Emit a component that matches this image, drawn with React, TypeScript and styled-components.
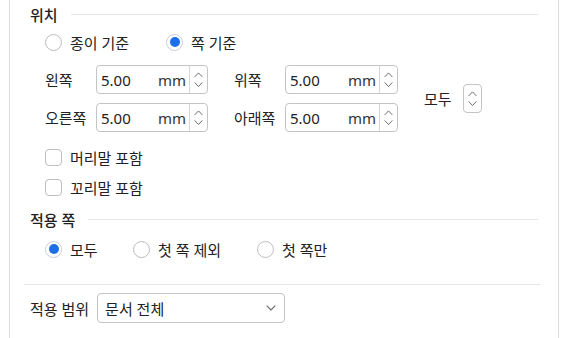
import React from "react";
import styled, { createGlobalStyle } from "styled-components";

const GlobalStyle = createGlobalStyle`
  body {
    margin: 0;
    background: #ffffff;
    font-family: "Noto Sans", "Noto Sans CJK KR", sans-serif;
    color: #222;
  }
`;

const Panel = styled.div`
  box-sizing: border-box;
  margin-left: 9px;
  width: 550px;
  height: 338px;
  padding: 0 20px;
  border-left: 1px solid #dedede;
  border-right: 1px solid #dedede;
  font-size: 15px;
`;

const SectionHeader = styled.div<{ $top?: number }>`
  display: flex;
  align-items: center;
  gap: 13px;
  height: 28px;
  margin-top: ${(p) => p.$top ?? 0}px;
  font-weight: 500;
  color: #1f1f1f;
  &::after {
    content: "";
    flex: 1;
    height: 1px;
    background: #e6e6e6;
  }
`;

const RadioRow = styled.div<{ $top?: number }>`
  display: flex;
  align-items: center;
  height: 28px;
  padding-left: 15px;
  margin-top: ${(p) => p.$top ?? 0}px;
`;

const Option = styled.label<{ $width: number }>`
  display: flex;
  align-items: center;
  gap: 8px;
  width: ${(p) => p.$width}px;
  color: #222;
`;

const RadioCircle = styled.span<{ $on?: boolean }>`
  box-sizing: border-box;
  width: 17px;
  height: 17px;
  border-radius: 50%;
  border: 1px solid ${(p) => (p.$on ? "#c9cfd8" : "#bdbdbd")};
  background: #fff;
  display: flex;
  align-items: center;
  justify-content: center;
  &::after {
    content: "";
    display: ${(p) => (p.$on ? "block" : "none")};
    width: 10px;
    height: 10px;
    border-radius: 50%;
    background: #1c6fe6;
  }
`;

const CheckBox = styled.span`
  box-sizing: border-box;
  width: 17px;
  height: 17px;
  border-radius: 4px;
  border: 1px solid #bdbdbd;
  background: #fff;
`;

const FieldsBlock = styled.div`
  display: flex;
  align-items: center;
  margin-top: 9px;
  padding-left: 15px;
`;

const FieldRows = styled.div`
  display: flex;
  flex-direction: column;
  gap: 9px;
`;

const FieldRow = styled.div`
  display: flex;
  gap: 26px;
`;

const Field = styled.div`
  display: flex;
  align-items: center;
`;

const FieldLabel = styled.span`
  width: 51px;
  color: #222;
`;

const SpinBox = styled.div<{ $width: number }>`
  box-sizing: border-box;
  display: flex;
  width: ${(p) => p.$width}px;
  height: 29px;
  border: 1px solid #c4c4c4;
  border-radius: 4px;
  background: #fff;
`;

const SpinText = styled.div`
  flex: 1;
  display: flex;
  align-items: center;
  justify-content: space-between;
  padding: 0 3px 0 4px;
  font-family: "Noto Sans", sans-serif;
  font-size: 15px;
  color: #222;
`;

const Unit = styled.span`
  color: #333;
`;

const Arrows = styled.div<{ $divider?: boolean }>`
  width: 17px;
  display: flex;
  flex-direction: column;
  align-items: center;
  justify-content: center;
  gap: 4px;
  border-left: ${(p) => (p.$divider ? "1px solid #d6d6d6" : "none")};
`;

const AllGroup = styled.div`
  display: flex;
  align-items: center;
  gap: 11px;
  margin-left: 26px;
`;

const LoneSpinner = styled.div`
  box-sizing: border-box;
  width: 19px;
  height: 29px;
  border: 1px solid #c4c4c4;
  border-radius: 4px;
  display: flex;
  justify-content: center;
`;

const CheckList = styled.div`
  display: flex;
  flex-direction: column;
  margin-top: 10px;
  padding-left: 15px;
`;

const CheckItem = styled.label`
  display: flex;
  align-items: center;
  gap: 8px;
  height: 30px;
  color: #222;
`;

const Divider = styled.div`
  height: 1px;
  background: #e6e6e6;
  margin: 21px -2px 0 -6px;
`;

const ScopeRow = styled.div`
  display: flex;
  align-items: center;
  gap: 8px;
  margin-top: 8px;
  color: #222;
`;

const Select = styled.div`
  box-sizing: border-box;
  display: flex;
  align-items: center;
  justify-content: space-between;
  width: 188px;
  height: 30px;
  padding: 0 8px 0 7px;
  border: 1px solid #c4c4c4;
  border-radius: 4px;
  background: #fff;
`;

const Chevron = ({ dir, size = 9 }: { dir: "up" | "down"; size?: number }) => (
  <svg width={size} height={size * 0.6} viewBox="0 0 10 6" fill="none">
    <path
      d={dir === "up" ? "M1 5.2 L5 1 L9 5.2" : "M1 0.8 L5 5 L9 0.8"}
      stroke="#6b6b6b"
      strokeWidth="1.1"
      strokeLinecap="round"
      strokeLinejoin="round"
    />
  </svg>
);

const Spinner = ({ divider }: { divider?: boolean }) => (
  <Arrows $divider={divider}>
    <Chevron dir="up" />
    <Chevron dir="down" />
  </Arrows>
);

const NumberField = ({ label, width }: { label: string; width: number }) => (
  <Field>
    <FieldLabel>{label}</FieldLabel>
    <SpinBox $width={width}>
      <SpinText>
        <span>5.00</span>
        <Unit>mm</Unit>
      </SpinText>
      <Spinner divider />
    </SpinBox>
  </Field>
);

export default function App() {
  return (
    <>
      <GlobalStyle />
      <Panel>
        <SectionHeader>위치</SectionHeader>
        <RadioRow>
          <Option $width={121}>
            <RadioCircle />
            종이 기준
          </Option>
          <Option $width={100}>
            <RadioCircle $on />
            쪽 기준
          </Option>
        </RadioRow>

        <FieldsBlock>
          <FieldRows>
            <FieldRow>
              <NumberField label="왼쪽" width={112} />
              <NumberField label="위쪽" width={113} />
            </FieldRow>
            <FieldRow>
              <NumberField label="오른쪽" width={112} />
              <NumberField label="아래쪽" width={113} />
            </FieldRow>
          </FieldRows>
          <AllGroup>
            <span>모두</span>
            <LoneSpinner>
              <Spinner />
            </LoneSpinner>
          </AllGroup>
        </FieldsBlock>

        <CheckList>
          <CheckItem>
            <CheckBox />
            머리말 포함
          </CheckItem>
          <CheckItem>
            <CheckBox />
            꼬리말 포함
          </CheckItem>
        </CheckList>

        <SectionHeader $top={3}>적용 쪽</SectionHeader>
        <RadioRow $top={2}>
          <Option $width={88}>
            <RadioCircle $on />
            모두
          </Option>
          <Option $width={124}>
            <RadioCircle />첫 쪽 제외
          </Option>
          <Option $width={100}>
            <RadioCircle />첫 쪽만
          </Option>
        </RadioRow>

        <Divider />

        <ScopeRow>
          <span>적용 범위</span>
          <Select>
            <span>문서 전체</span>
            <Chevron dir="down" size={10} />
          </Select>
        </ScopeRow>
      </Panel>
    </>
  );
}
